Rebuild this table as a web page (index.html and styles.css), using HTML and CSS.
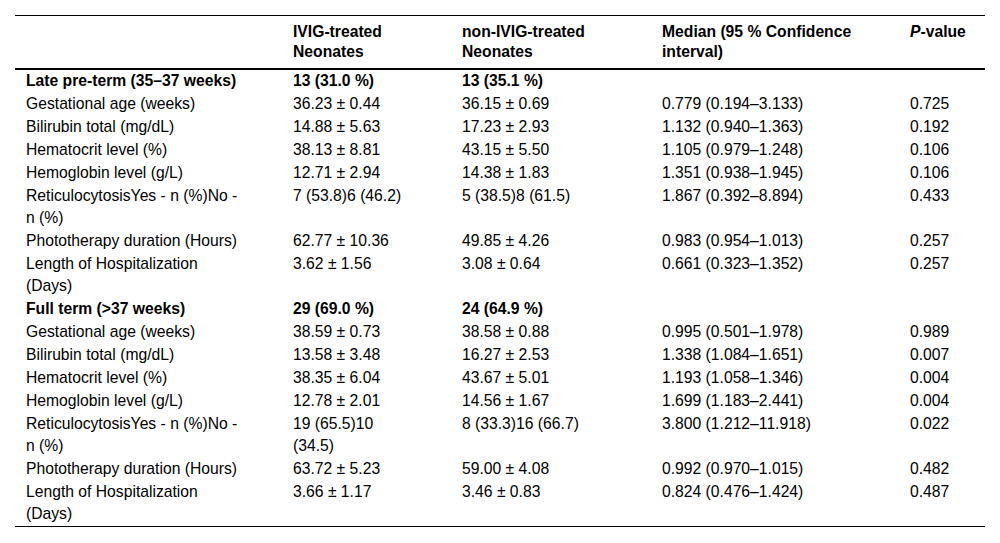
FILE: index.html
```html
<!DOCTYPE html>
<html lang="en">
<head>
<meta charset="utf-8">
<title>Table</title>
<link rel="stylesheet" href="styles.css">
</head>
<body>
<table class="data">
  <thead>
    <tr>
      <th class="c1"></th>
      <th class="c2">IVIG-treated Neonates</th>
      <th class="c3">non-IVIG-treated Neonates</th>
      <th class="c4">Median (95 % Confidence interval)</th>
      <th class="c5"><em>P</em>-value</th>
    </tr>
  </thead>
  <tbody>
    <tr class="group"><td class="c1">Late pre-term (35–37 weeks)</td><td class="c2">13 (31.0 %)</td><td class="c3">13 (35.1 %)</td><td class="c4"></td><td class="c5"></td></tr>
    <tr><td class="c1">Gestational age (weeks)</td><td class="c2">36.23 ± 0.44</td><td class="c3">36.15 ± 0.69</td><td class="c4">0.779 (0.194–3.133)</td><td class="c5">0.725</td></tr>
    <tr><td class="c1">Bilirubin total (mg/dL)</td><td class="c2">14.88 ± 5.63</td><td class="c3">17.23 ± 2.93</td><td class="c4">1.132 (0.940–1.363)</td><td class="c5">0.192</td></tr>
    <tr><td class="c1">Hematocrit level (%)</td><td class="c2">38.13 ± 8.81</td><td class="c3">43.15 ± 5.50</td><td class="c4">1.105 (0.979–1.248)</td><td class="c5">0.106</td></tr>
    <tr><td class="c1">Hemoglobin level (g/L)</td><td class="c2">12.71 ± 2.94</td><td class="c3">14.38 ± 1.83</td><td class="c4">1.351 (0.938–1.945)</td><td class="c5">0.106</td></tr>
    <tr><td class="c1">ReticulocytosisYes - n (%)No - n (%)</td><td class="c2">7 (53.8)6 (46.2)</td><td class="c3">5 (38.5)8 (61.5)</td><td class="c4">1.867 (0.392–8.894)</td><td class="c5">0.433</td></tr>
    <tr><td class="c1">Phototherapy duration (Hours)</td><td class="c2">62.77 ± 10.36</td><td class="c3">49.85 ± 4.26</td><td class="c4">0.983 (0.954–1.013)</td><td class="c5">0.257</td></tr>
    <tr><td class="c1">Length of Hospitalization (Days)</td><td class="c2">3.62 ± 1.56</td><td class="c3">3.08 ± 0.64</td><td class="c4">0.661 (0.323–1.352)</td><td class="c5">0.257</td></tr>
    <tr class="group"><td class="c1">Full term (&gt;37 weeks)</td><td class="c2">29 (69.0 %)</td><td class="c3">24 (64.9 %)</td><td class="c4"></td><td class="c5"></td></tr>
    <tr><td class="c1">Gestational age (weeks)</td><td class="c2">38.59 ± 0.73</td><td class="c3">38.58 ± 0.88</td><td class="c4">0.995 (0.501–1.978)</td><td class="c5">0.989</td></tr>
    <tr><td class="c1">Bilirubin total (mg/dL)</td><td class="c2">13.58 ± 3.48</td><td class="c3">16.27 ± 2.53</td><td class="c4">1.338 (1.084–1.651)</td><td class="c5">0.007</td></tr>
    <tr><td class="c1">Hematocrit level (%)</td><td class="c2">38.35 ± 6.04</td><td class="c3">43.67 ± 5.01</td><td class="c4">1.193 (1.058–1.346)</td><td class="c5">0.004</td></tr>
    <tr><td class="c1">Hemoglobin level (g/L)</td><td class="c2">12.78 ± 2.01</td><td class="c3">14.56 ± 1.67</td><td class="c4">1.699 (1.183–2.441)</td><td class="c5">0.004</td></tr>
    <tr><td class="c1">ReticulocytosisYes - n (%)No - n (%)</td><td class="c2">19 (65.5)10 (34.5)</td><td class="c3">8 (33.3)16 (66.7)</td><td class="c4">3.800 (1.212–11.918)</td><td class="c5">0.022</td></tr>
    <tr><td class="c1">Phototherapy duration (Hours)</td><td class="c2">63.72 ± 5.23</td><td class="c3">59.00 ± 4.08</td><td class="c4">0.992 (0.970–1.015)</td><td class="c5">0.482</td></tr>
    <tr class="last"><td class="c1">Length of Hospitalization (Days)</td><td class="c2">3.66 ± 1.17</td><td class="c3">3.46 ± 0.83</td><td class="c4">0.824 (0.476–1.424)</td><td class="c5">0.487</td></tr>
  </tbody>
</table>
</body>
</html>
```
FILE: styles.css
```css
html, body {
  margin: 0;
  padding: 0;
  background: #fff;
}

body {
  font-family: "Liberation Sans", Arial, sans-serif;
  font-size: 15.7px;
  color: #000;
}

.data {
  margin: 15px 15px 0 15px;
  width: 970px;
  table-layout: fixed;
  border-collapse: separate;
  border-spacing: 0;
}

.data th,
.data td {
  box-sizing: border-box;
  text-align: left;
  vertical-align: top;
  padding-left: 11px;
}

.data th {
  font-weight: bold;
  line-height: 20px;
  padding-top: 6px;
  padding-bottom: 6px;
  border-top: 1px solid #000;
  border-bottom: 2px solid #000;
}

.data th em {
  font-style: italic;
}

.data td {
  line-height: 22px;
  padding-top: 0;
  padding-bottom: 1px;
}

.data .group td {
  font-weight: bold;
}

.data .last td {
  border-bottom: 1px solid #000;
}

.data .c1 { width: 267px; padding-right: 37px; }
.data .c2 { width: 169px; padding-right: 48px; }
.data .c3 { width: 200px; padding-right: 19px; }
.data .c4 { width: 248px; padding-right: 17px; }
.data .c5 { width: 86px; padding-right: 0; }
```
